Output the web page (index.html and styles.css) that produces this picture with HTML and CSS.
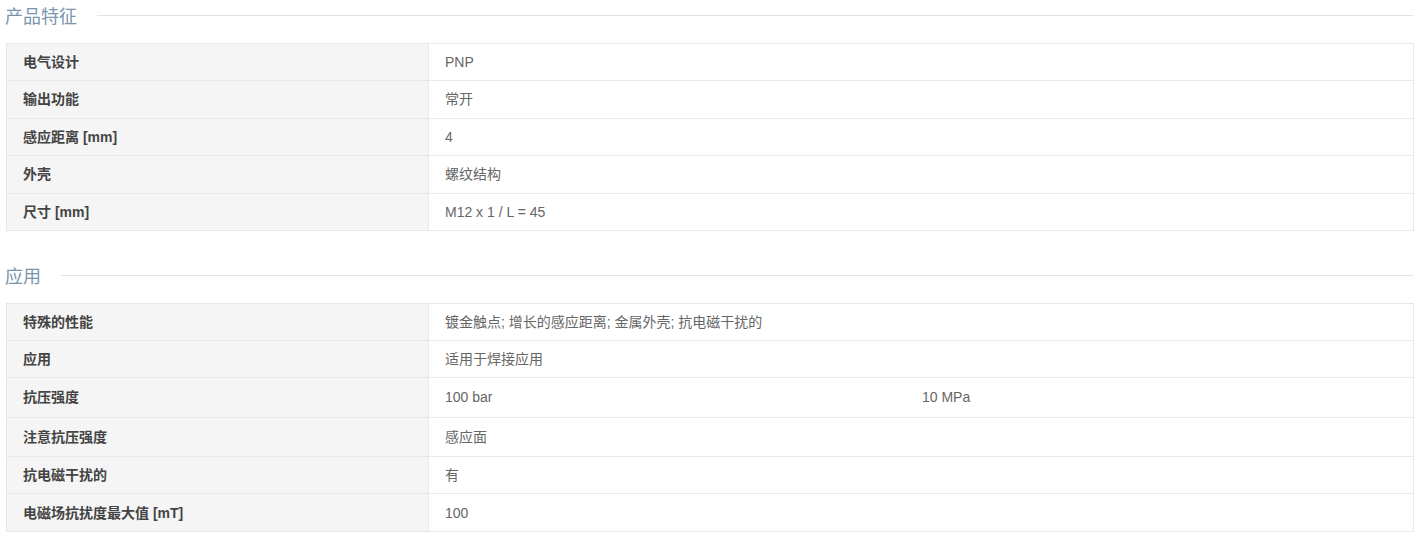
FILE: index.html
```html
<!DOCTYPE html>
<html lang="zh">
<head>
<meta charset="utf-8">
<link rel="stylesheet" href="styles.css">
</head>
<body>
<section class="section">
  <div class="sec-head"><h3 class="sec-title">产品特征</h3><span class="sec-line"></span></div>
  <table class="spec">
    <tr><th>电气设计</th><td>PNP</td></tr>
    <tr><th>输出功能</th><td>常开</td></tr>
    <tr><th>感应距离 [mm]</th><td>4</td></tr>
    <tr><th>外壳</th><td>螺纹结构</td></tr>
    <tr><th>尺寸 [mm]</th><td>M12 x 1 / L = 45</td></tr>
  </table>
</section>
<section class="section second">
  <div class="sec-head"><h3 class="sec-title">应用</h3><span class="sec-line"></span></div>
  <table class="spec compact">
    <tr><th>特殊的性能</th><td>镀金触点; 增长的感应距离; 金属外壳; 抗电磁干扰的</td></tr>
    <tr><th>应用</th><td>适用于焊接应用</td></tr>
    <tr class="tall"><th>抗压强度</th><td><div class="pair"><span>100 bar</span><span>10 MPa</span></div></td></tr>
    <tr class="mid"><th>注意抗压强度</th><td>感应面</td></tr>
    <tr><th>抗电磁干扰的</th><td>有</td></tr>
    <tr class="last"><th>电磁场抗扰度最大值 [mT]</th><td>100</td></tr>
  </table>
</section>
</body>
</html>
```
FILE: styles.css
```css
html, body {
  margin: 0;
  padding: 0;
  background: #fff;
}
body {
  padding: 0 6px 0 6px;
  font-family: "Liberation Sans", Arial, "Noto Sans CJK SC", sans-serif;
  font-size: 14px;
  color: #666;
}
.section.second {
  margin-top: 29px;
}
.sec-head {
  display: flex;
  align-items: center;
  height: 30px;
  margin-bottom: 13px;
}
.sec-title {
  margin: 0 20px 0 -1px;
  font-family: "Noto Sans CJK SC", sans-serif;
  font-weight: 400;
  font-size: 18px;
  line-height: 30px;
  color: #7a95ad;
}
.sec-line {
  flex: 1;
  height: 1px;
  background: #e3e3e3;
  margin-right: 1px;
}
.spec {
  width: 100%;
  border-collapse: collapse;
  border: 1px solid #e8e8e8;
}
.spec th, .spec td {
  border: 1px solid #e8e8e8;
  padding: 8px 16px;
  line-height: 20.4px;
  text-align: left;
  vertical-align: middle;
}
.spec.compact th, .spec.compact td {
  line-height: 20px;
}
.spec th {
  width: 389px;
  background: #f5f5f5;
  font-weight: 700;
  color: #444;
}
.spec td {
  color: #666;
}
.spec tr.tall th, .spec tr.tall td {
  padding-top: 9px;
  padding-bottom: 10px;
}
.spec tr.mid th, .spec tr.mid td {
  padding-top: 9px;
  padding-bottom: 9px;
}
.spec tr.last th, .spec tr.last td {
  padding-top: 9px;
}
.pair {
  display: grid;
  grid-template-columns: 477px 1fr;
}
```
